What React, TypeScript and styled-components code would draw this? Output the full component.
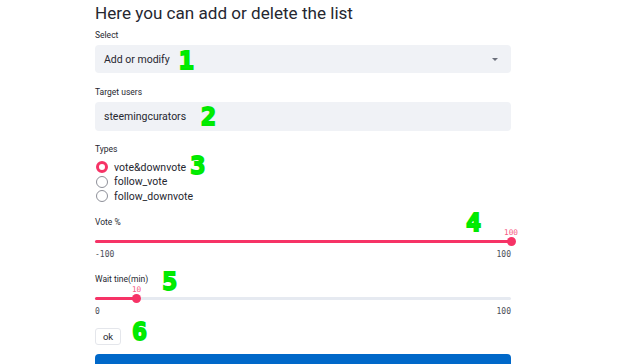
import styled, { createGlobalStyle } from "styled-components"

const GlobalStyle = createGlobalStyle`
  body {
    margin: 0;
    background: #fff;
    font-family: Roboto, "Noto Sans", sans-serif;
    color: #262730;
    overflow: hidden;
  }
`

const Page = styled.div`
  width: 416px;
  margin-left: 95px;
  display: flex;
  flex-direction: column;
`

const Title = styled.h1`
  margin: 0;
  font-size: 17.1px;
  font-weight: 400;
  line-height: 26px;
  color: #262730;
`

const Field = styled.div<{ $top: number }>`
  margin-top: ${(p) => p.$top}px;
  display: flex;
  flex-direction: column;
`

const Label = styled.div`
  font-size: 8.5px;
  line-height: 12px;
  height: 12px;
  color: #262730;
  display: flex;
  align-items: center;
`

const Box = styled.div<{ $h: number }>`
  margin-top: 4px;
  height: ${(p) => p.$h}px;
  background: #f0f2f6;
  border-radius: 4px;
  display: flex;
  align-items: center;
  padding: 0 9px;
  font-size: 10.5px;
`

const Caret = styled.span`
  margin-left: auto;
  margin-right: 4px;
  width: 0;
  height: 0;
  border-left: 3px solid transparent;
  border-right: 3px solid transparent;
  border-top: 3px solid #6b6f7b;
`

const Mark = styled.span<{ $dy?: number; $left?: number }>`
  display: inline-block;
  height: 12px;
  line-height: 12px;
  margin-left: ${(p) => p.$left ?? 0}px;
  font-family: "DejaVu Sans Mono", "Liberation Mono", monospace;
  font-weight: 700;
  font-size: 25px;
  color: #00f000;
  -webkit-text-stroke: 1.8px #00e800;
  transform: translateY(${(p) => p.$dy ?? 0}px);
`

const RadioList = styled.div`
  margin-top: 5px;
  display: flex;
  flex-direction: column;
`

const RadioRow = styled.div`
  height: 14.5px;
  display: flex;
  align-items: center;
  font-size: 10.5px;
`

const Dot = styled.span<{ $on?: boolean }>`
  box-sizing: border-box;
  width: 12px;
  height: 12px;
  border-radius: 50%;
  margin-left: 1px;
  margin-right: 6px;
  border: ${(p) => (p.$on ? "3.5px solid #f63366" : "1px solid #8e9099")};
  background: #fff;
`

const SliderWrap = styled.div`
  position: relative;
  height: 32px;
  display: flex;
  flex-direction: column;
`

const TrackArea = styled.div`
  margin-top: 9px;
  height: 10px;
  display: flex;
  align-items: center;
`

const Track = styled.div`
  width: 100%;
  height: 3px;
  border-radius: 2px;
  background: #e6eaf1;
  position: relative;
`

const Fill = styled.div`
  height: 100%;
  background: #f63366;
  border-radius: 2px;
`

const Thumb = styled.div`
  position: absolute;
  top: 50%;
  width: 9px;
  height: 9px;
  margin: -4.5px 0 0 -4.5px;
  border-radius: 50%;
  background: #f63366;
`

const ValueTag = styled.div`
  position: absolute;
  bottom: 6px;
  transform: translateX(-50%);
  font-family: "DejaVu Sans Mono", monospace;
  font-size: 7.8px;
  color: #f63366;
  opacity: 0.8;
`

const Ticks = styled.div`
  margin-top: 3px;
  height: 10px;
  display: flex;
  justify-content: space-between;
  font-family: "DejaVu Sans Mono", monospace;
  font-size: 8px;
  line-height: 10px;
  color: #4a4d57;
`

const Corner = styled.span`
  position: absolute;
  left: 371px;
  top: -12px;
`

const ButtonRow = styled.div`
  margin-top: 11px;
  display: flex;
  align-items: center;
`

const Button = styled.button`
  height: 17px;
  width: 26px;
  padding: 0;
  background: #fff;
  border: 1px solid #e4e6eb;
  border-radius: 3px;
  font-family: Roboto, sans-serif;
  font-size: 9.5px;
  color: #262730;
`

const Primary = styled.div`
  margin-top: 9px;
  height: 20px;
  background: #0068c9;
  border-radius: 4px;
`

const Slider = ({ min, max, value, mark }: { min: number; max: number; value: number; mark?: React.ReactNode }) => {
  const pct = ((value - min) / (max - min)) * 100
  return (
    <SliderWrap>
      {mark}
      <TrackArea>
        <Track>
          <Fill style={{ width: `${pct}%` }} />
          <Thumb style={{ left: `${pct}%` }} />
          <ValueTag style={{ left: `${pct}%` }}>{value}</ValueTag>
        </Track>
      </TrackArea>
      <Ticks>
        <span>{min}</span>
        <span>{max}</span>
      </Ticks>
    </SliderWrap>
  )
}

export default function App() {
  return (
    <>
      <GlobalStyle />
      <Page>
        <Title>Here you can add or delete the list</Title>

        <Field $top={3}>
          <Label>Select</Label>
          <Box $h={28}>
            Add or modify
            <Mark $left={9} $dy={2}>1</Mark>
            <Caret />
          </Box>
        </Field>

        <Field $top={13}>
          <Label>Target users</Label>
          <Box $h={29}>
            steemingcurators
            <Mark $left={15} $dy={0}>2</Mark>
          </Box>
        </Field>

        <Field $top={12}>
          <Label>Types</Label>
          <RadioList>
            <RadioRow>
              <Dot $on />
              vote&amp;downvote
              <Mark $left={4} $dy={-1}>3</Mark>
            </RadioRow>
            <RadioRow>
              <Dot />
              follow_vote
            </RadioRow>
            <RadioRow>
              <Dot />
              follow_downvote
            </RadioRow>
          </RadioList>
        </Field>

        <Field $top={12}>
          <Label>Vote %</Label>
          <Slider min={-100} max={100} value={100} mark={<Corner><Mark>4</Mark></Corner>} />
        </Field>

        <Field $top={13}>
          <Label>
            Wait tine(min)
            <Mark $left={14} $dy={3}>5</Mark>
          </Label>
          <Slider min={0} max={100} value={10} />
        </Field>

        <ButtonRow>
          <Button>ok</Button>
          <Mark $left={11} $dy={-4}>6</Mark>
        </ButtonRow>

        <Primary />
      </Page>
    </>
  )
}
